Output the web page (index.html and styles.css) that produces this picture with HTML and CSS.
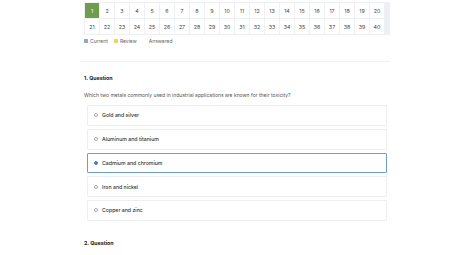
FILE: index.html
```html
<!DOCTYPE html>
<html lang="en">
<head>
    <meta charset="UTF-8">
    <meta name="viewport" content="width=device-width, initial-scale=1.0">
    <title>Quiz</title>
    <link rel="stylesheet" href="styles.css">
</head>
<body>
    <div id="quiz">
        <div id="nav-grid">
            <div class="cell current">1</div>
            <div class="cell">2</div>
            <div class="cell">3</div>
            <div class="cell">4</div>
            <div class="cell">5</div>
            <div class="cell">6</div>
            <div class="cell">7</div>
            <div class="cell">8</div>
            <div class="cell">9</div>
            <div class="cell">10</div>
            <div class="cell">11</div>
            <div class="cell">12</div>
            <div class="cell">13</div>
            <div class="cell">14</div>
            <div class="cell">15</div>
            <div class="cell">16</div>
            <div class="cell">17</div>
            <div class="cell">18</div>
            <div class="cell">19</div>
            <div class="cell">20</div>
            <div class="cell">21</div>
            <div class="cell">22</div>
            <div class="cell">23</div>
            <div class="cell">24</div>
            <div class="cell">25</div>
            <div class="cell">26</div>
            <div class="cell">27</div>
            <div class="cell">28</div>
            <div class="cell">29</div>
            <div class="cell">30</div>
            <div class="cell">31</div>
            <div class="cell">32</div>
            <div class="cell">33</div>
            <div class="cell">34</div>
            <div class="cell">35</div>
            <div class="cell">36</div>
            <div class="cell">37</div>
            <div class="cell">38</div>
            <div class="cell">39</div>
            <div class="cell">40</div>
        </div>
        <div id="legend">
            <span class="legend-item"><span class="swatch swatch-current"></span>Current</span>
            <span class="legend-item"><span class="swatch swatch-review"></span>Review</span>
            <span class="legend-item"><span class="swatch swatch-answered"></span>Answered</span>
        </div>

        <hr class="divider">

        <div class="question">
            <h3 class="question-title">1. Question</h3>
            <p class="question-text">Which two metals commonly used in industrial applications are known for their toxicity?</p>
            <label class="option"><span class="radio"></span>Gold and silver</label>
            <label class="option"><span class="radio"></span>Aluminum and titanium</label>
            <label class="option selected"><span class="radio"></span>Cadmium and chromium</label>
            <label class="option"><span class="radio"></span>Iron and nickel</label>
            <label class="option"><span class="radio"></span>Copper and zinc</label>
        </div>

        <div class="question next">
            <h3 class="question-title">2. Question</h3>
        </div>
    </div>
</body>
</html>
```

FILE: styles.css
```css
body {
    font-family: Inter, "Noto Sans", sans-serif;
    margin: 0;
    padding: 0;
    background: #fff;
    color: #333;
}
#quiz {
    width: 306px;
    margin-left: 84px;
    padding-top: 2px;
}
#nav-grid {
    display: grid;
    grid-template-columns: repeat(20, 14px);
    grid-auto-rows: 15px;
    gap: 1px;
    padding: 1px 6px 1px 1px;
    background: #eef0f3;
    width: max-content;
}
.cell {
    background: #fff;
    font-size: 5.3px;
    color: #444;
    display: flex;
    align-items: center;
    justify-content: center;
}
.cell.current {
    background: #6f9c4f;
    color: #fff;
}
#legend {
    display: flex;
    gap: 6px;
    margin-top: 3px;
    font-size: 5px;
    color: #666;
    align-items: center;
}
.legend-item {
    display: flex;
    align-items: center;
    gap: 2px;
}
.swatch {
    width: 4px;
    height: 4px;
    display: inline-block;
}
.swatch-current {
    background: #8eaacb;
}
.swatch-review {
    background: #f0cf6a;
}
.swatch-answered {
    background: #fff;
}
.divider {
    border: none;
    border-top: 1px solid #f1f2f4;
    margin: 17px 0 0 -4px;
}
.question {
    margin-top: 13px;
}
.question.next {
    margin-top: 19px;
}
.question-title {
    font-size: 5.3px;
    font-weight: 700;
    color: #222;
    margin: 0;
}
.question-text {
    font-size: 5px;
    color: #555;
    margin: 11px 0 7px;
}
.option {
    display: flex;
    align-items: center;
    height: 18.75px;
    margin: 0 3px 3px 3px;
    padding-left: 6px;
    border: 1px solid #eceef0;
    border-radius: 1px;
    font-size: 5.2px;
    font-weight: 500;
    color: #333;
}
.option.selected {
    border-color: #6b9fd0;
}
.radio {
    width: 2px;
    height: 2px;
    border: 0.7px solid #aaa;
    border-radius: 50%;
    margin-right: 4px;
}
.option.selected .radio {
    background: #4c7ec2;
    border-color: #4c7ec2;
}
```
